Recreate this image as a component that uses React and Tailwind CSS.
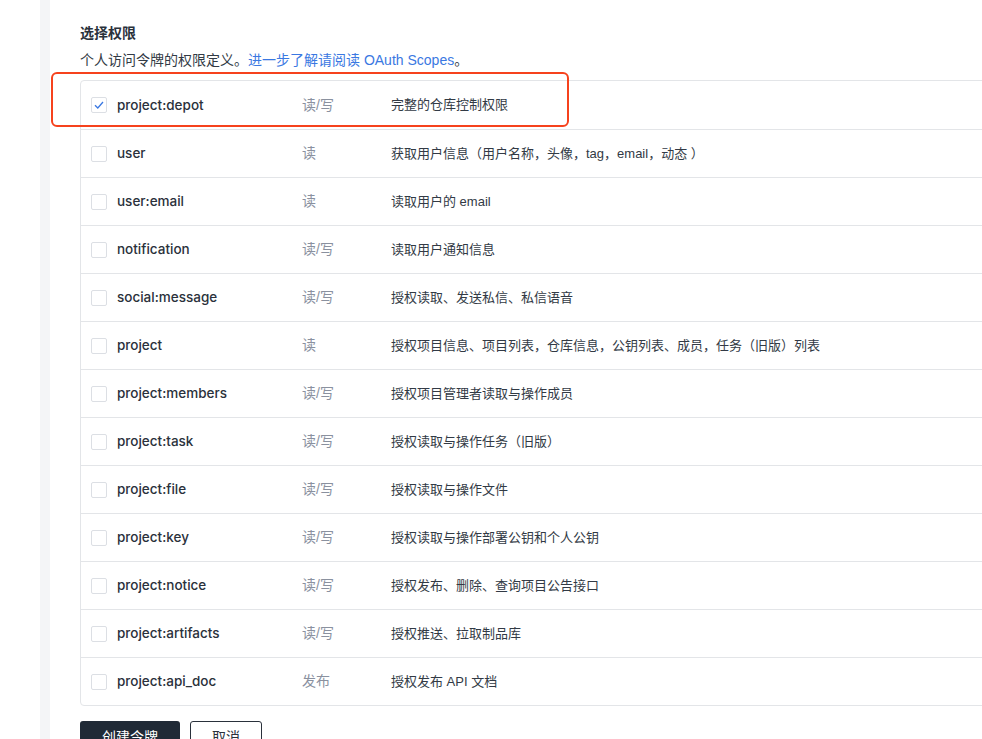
import React from "react";

const rows = [
  ["project:depot", "读/写", "完整的仓库控制权限", true],
  ["user", "读", "获取用户信息（用户名称，头像，tag，email，动态 ）"],
  ["user:email", "读", "读取用户的 email"],
  ["notification", "读/写", "读取用户通知信息"],
  ["social:message", "读/写", "授权读取、发送私信、私信语音"],
  ["project", "读", "授权项目信息、项目列表，仓库信息，公钥列表、成员，任务（旧版）列表"],
  ["project:members", "读/写", "授权项目管理者读取与操作成员"],
  ["project:task", "读/写", "授权读取与操作任务（旧版）"],
  ["project:file", "读/写", "授权读取与操作文件"],
  ["project:key", "读/写", "授权读取与操作部署公钥和个人公钥"],
  ["project:notice", "读/写", "授权发布、删除、查询项目公告接口"],
  ["project:artifacts", "读/写", "授权推送、拉取制品库"],
  ["project:api_doc", "发布", "授权发布 API 文档"],
];

export default function App() {
  return (
    <div
      className="relative flex h-[739px] w-[982px] overflow-hidden bg-white text-[14px] text-[#323a45]"
      style={{ fontFamily: '"Liberation Sans", "Noto Sans CJK SC", sans-serif' }}
    >
      <div className="w-[40px] shrink-0 bg-white" />
      <div className="w-[10px] shrink-0 bg-[#f4f5f7]" />
      <div className="flex flex-col pl-[30px] pt-[22px]">
        <div className="text-[14px] font-bold leading-[22px] text-[#2a313b]">选择权限</div>
        <div className="mt-[5px] leading-[22px] text-[#323a45]">
          个人访问令牌的权限定义。<span className="text-[#3a78e2]">进一步了解请阅读 OAuth Scopes</span>。
        </div>
        <div className="mt-[9px] w-[1000px] rounded-[4px] border border-[#e3e5e8]">
          {rows.map(([name, perm, desc, checked], i) => (
            <div
              key={name}
              className={`flex h-[48px] items-center ${i > 0 ? "border-t border-[#e3e5e8]" : ""}`}
            >
              <div className="ml-[10px] flex h-[16px] w-[16px] items-center justify-center rounded-[2px] border border-[#dcdfe4] bg-white">
                {checked && (
                  <svg width="10" height="8" viewBox="0 0 10 8" fill="none">
                    <path d="M1 4.2 L3.8 7 L9 1" stroke="#3a78e2" strokeWidth="1.3" />
                  </svg>
                )}
              </div>
              <div
                className="ml-[10px] w-[185px] text-[13.5px] font-medium text-[#2a313b]"
                style={{ fontFamily: 'Inter, "Liberation Sans", sans-serif' }}
              >
                {name}
              </div>
              <div className="w-[89px] text-[#8a919f]">{perm}</div>
              <div className="text-[13px] text-[#323a45]">{desc}</div>
            </div>
          ))}
        </div>
        <div className="mt-[15px] flex gap-[10px]">
          <button className="h-[32px] w-[100px] rounded-[3px] bg-[#202a36] text-[14px] text-white">创建令牌</button>
          <button className="h-[32px] w-[72px] rounded-[3px] border border-[#2a313b] bg-white text-[14px] text-[#2a313b]">取消</button>
        </div>
      </div>
      <div className="absolute left-[51px] top-[72px] h-[55px] w-[518px] rounded-[6px] border-[2.5px] border-[#f6421d]" />
    </div>
  );
}
